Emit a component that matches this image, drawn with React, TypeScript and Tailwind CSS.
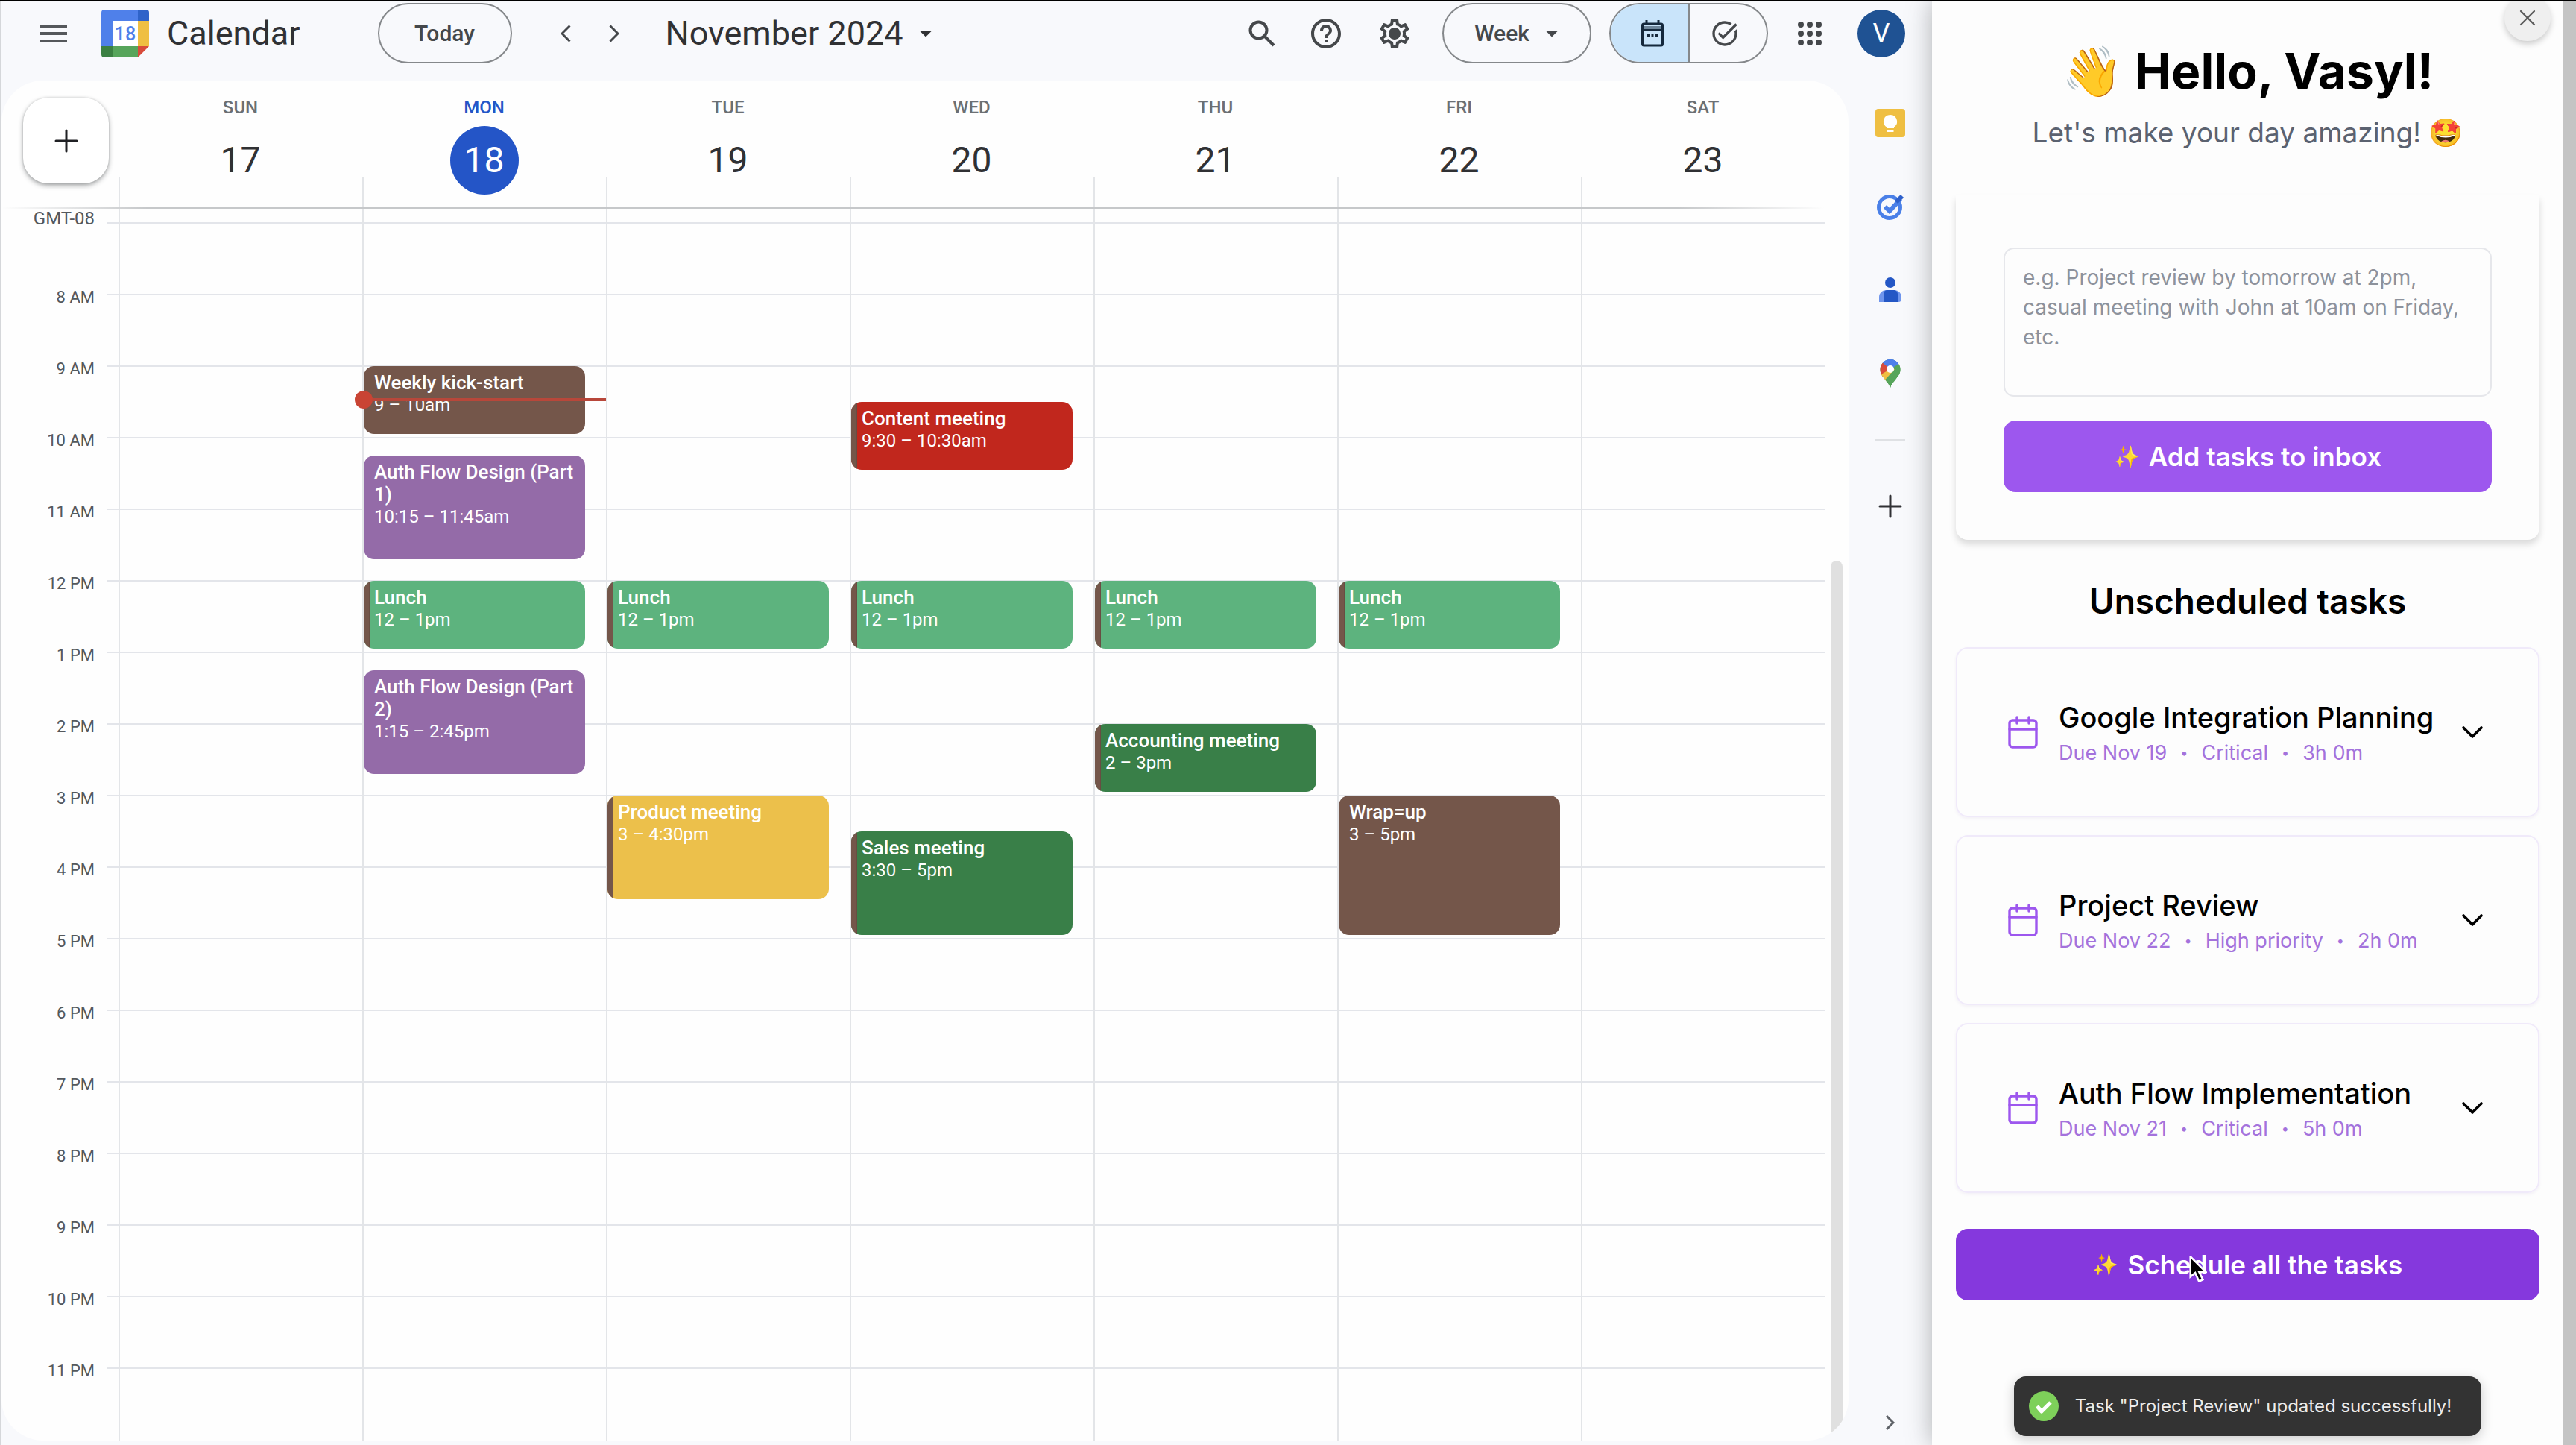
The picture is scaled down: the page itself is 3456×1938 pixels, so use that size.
import React from 'react';
import { Calendar, ChevronDown, Plus, X } from 'lucide-react';
import { MdArrowDropDown, MdHelpOutline, MdOutlineSettings, MdTaskAlt } from 'react-icons/md';

interface CalendarEvent {
  title: string;
  time: string;
  start: number; // hours, 24h clock
  end: number;
  color: string;
  striped?: boolean;
  now?: boolean;
}

interface Day {
  name: string;
  date: number;
  today?: boolean;
  events: CalendarEvent[];
}

interface Task {
  title: string;
  due: string;
  priority: string;
  duration: string;
}

const GRID_START = 7;

const lunch: CalendarEvent = {
  title: 'Lunch',
  time: '12 – 1pm',
  start: 12,
  end: 13,
  color: 'bg-[#5db37e]',
  striped: true,
};

const days: Day[] = [
  { name: 'SUN', date: 17, events: [] },
  {
    name: 'MON',
    date: 18,
    today: true,
    events: [
      { title: 'Weekly kick-start', time: '9 – 10am', start: 9, end: 10, color: 'bg-[#74564a]', now: true },
      { title: 'Auth Flow Design (Part 1)', time: '10:15 – 11:45am', start: 10.25, end: 11.75, color: 'bg-[#946ba8]' },
      lunch,
      { title: 'Auth Flow Design (Part 2)', time: '1:15 – 2:45pm', start: 13.25, end: 14.75, color: 'bg-[#946ba8]' },
    ],
  },
  {
    name: 'TUE',
    date: 19,
    events: [
      lunch,
      { title: 'Product meeting', time: '3 – 4:30pm', start: 15, end: 16.5, color: 'bg-[#ecc04b]', striped: true },
    ],
  },
  {
    name: 'WED',
    date: 20,
    events: [
      { title: 'Content meeting', time: '9:30 – 10:30am', start: 9.5, end: 10.5, color: 'bg-[#c1271d]', striped: true },
      lunch,
      { title: 'Sales meeting', time: '3:30 – 5pm', start: 15.5, end: 17, color: 'bg-[#397f48]', striped: true },
    ],
  },
  {
    name: 'THU',
    date: 21,
    events: [
      lunch,
      { title: 'Accounting meeting', time: '2 – 3pm', start: 14, end: 15, color: 'bg-[#397f48]', striped: true },
    ],
  },
  {
    name: 'FRI',
    date: 22,
    events: [
      lunch,
      { title: 'Wrap=up', time: '3 – 5pm', start: 15, end: 17, color: 'bg-[#74564a]' },
    ],
  },
  { name: 'SAT', date: 23, events: [] },
];

const hours = [
  '8 AM', '9 AM', '10 AM', '11 AM', '12 PM', '1 PM', '2 PM', '3 PM',
  '4 PM', '5 PM', '6 PM', '7 PM', '8 PM', '9 PM', '10 PM', '11 PM',
];

const tasks: Task[] = [
  { title: 'Google Integration Planning', due: 'Due Nov 19', priority: 'Critical', duration: '3h 0m' },
  { title: 'Project Review', due: 'Due Nov 22', priority: 'High priority', duration: '2h 0m' },
  { title: 'Auth Flow Implementation', due: 'Due Nov 21', priority: 'Critical', duration: '5h 0m' },
];

function CalendarLogo() {
  return (
    <svg viewBox="0 0 64 64" className="size-16 shrink-0" aria-hidden="true">
      <path d="M4 0h45v15H15v34H0V4a4 4 0 0 1 4-4z" fill="#4f80ea" />
      <path d="M49 0h11a4 4 0 0 1 4 4v11H49z" fill="#2f63c9" />
      <path d="M49 15h15v34H49z" fill="#efbf42" />
      <path d="M15 49h34v15H15z" fill="#57a55b" />
      <path d="M0 49h15v15H4a4 4 0 0 1-4-4z" fill="#3b8042" />
      <path d="M49 49h15L49 64z" fill="#d84b3b" />
      <path d="M15 15h34v34H15z" fill="#fff" />
      <text x="32" y="41" textAnchor="middle" fontSize="25" fontWeight="500" fill="#4f80ea">
        18
      </text>
    </svg>
  );
}

function SearchIcon() {
  return (
    <svg viewBox="0 0 36 36" className="size-9" fill="none" stroke="currentColor" strokeWidth="4">
      <circle cx="13.5" cy="13.5" r="11" />
      <path d="m21.500 21.500 12.500 12.500" />
    </svg>
  );
}

function SettingsIcon() {
  return (
    <svg viewBox="0 0 24 24" className="size-12" fill="currentColor">
      <MdOutlineSettings size={24} />
      <circle cx="12" cy="12" r="3.700" />
    </svg>
  );
}

function AppsIcon() {
  return (
    <svg viewBox="0 0 32 32" className="size-8" fill="currentColor">
      {[4, 16, 28].map((y) => [4, 16, 28].map((x) => <circle key={`${x}-${y}`} cx={x} cy={y} r="4" />))}
    </svg>
  );
}

function Header() {
  return (
    <header className="flex items-center pt-[3px] pb-[23px] pl-[52px] pr-9 text-[#45484b]">
      <button aria-label="Main menu">
        <svg viewBox="0 0 36 24" className="h-6 w-9" fill="#55585b">
          <path d="M0 0h36v4H0zM0 10h36v4H0zM0 20h36v4H0z" />
        </svg>
      </button>
      <div className="ml-[46px] flex items-center gap-6">
        <CalendarLogo />
        <span className="text-[45px] leading-[56px] text-[#303134]">Calendar</span>
      </div>
      <button className="ml-[104px] h-[81px] w-[180px] rounded-full border-2 border-[#85888b] text-[30px] font-medium">
        Today
      </button>
      <div className="ml-10 flex">
        <button aria-label="Previous week" className="flex w-[65px] justify-center">
          <svg viewBox="0 0 14 24" className="h-6 w-[14px]" fill="none" stroke="currentColor" strokeWidth="3">
            <path d="M12.500 1.500 2 12l10.500 10.500" />
          </svg>
        </button>
        <button aria-label="Next week" className="flex w-[65px] justify-center">
          <svg viewBox="0 0 14 24" className="h-6 w-[14px]" fill="none" stroke="currentColor" strokeWidth="3">
            <path d="M1.500 1.500 12 12 1.500 22.500" />
          </svg>
        </button>
      </div>
      <button className="ml-9 flex items-center gap-3 text-[45px] leading-[56px] text-[#303134]">
        November 2024
        <MdArrowDropDown className="size-9" />
      </button>

      <div className="ml-auto flex items-center">
        <button aria-label="Search" className="flex w-[84px] justify-center">
          <SearchIcon />
        </button>
        <button aria-label="Support" className="flex w-[88px] justify-center">
          <MdHelpOutline className="size-12" />
        </button>
        <button aria-label="Settings" className="flex w-[96px] justify-center">
          <SettingsIcon />
        </button>
        <button className="ml-4 flex h-[81px] w-[200px] items-center justify-center gap-3 rounded-full border-2 border-[#85888b] pl-2 text-[30px] font-medium">
          Week
          <MdArrowDropDown className="size-9" />
        </button>
        <div className="ml-6 flex h-[81px] w-[213px] overflow-hidden rounded-full border-2 border-[#85888b]">
          <button aria-label="Calendar view" className="flex flex-1 items-center justify-center border-r-2 border-[#85888b] bg-[#c9e4fa] pl-2">
            <svg viewBox="0 0 30 36" className="h-9 w-[30px]" fill="none" stroke="#15283c" strokeWidth="3">
              <rect x="1.500" y="5" width="27" height="29" rx="2" />
              <path d="M7 0v6M23 0v6M1.500 13h27" />
              <path d="M1.500 9h27" strokeWidth="1" />
              <path d="M8 20.500h3M13.500 20.500h3M19 20.500h3" />
            </svg>
          </button>
          <button aria-label="Tasks view" className="flex flex-1 items-center justify-center pr-2">
            <MdTaskAlt className="size-10" />
          </button>
        </div>
        <button aria-label="Google apps" className="flex w-[112px] justify-center">
          <AppsIcon />
        </button>
        <button aria-label="Account" className="ml-2 size-16 rounded-full bg-[#1f5293] text-[36px] leading-[64px] text-white">
          V
        </button>
      </div>
    </header>
  );
}

function EventBlock({ event }: { event: CalendarEvent }) {
  const row = (event.start - GRID_START) * 4 + 1;
  const span = (event.end - event.start) * 4;

  return (
    <div className="relative col-start-1 mr-7 mb-[5px]" style={{ gridRow: `${row} / span ${span}` }}>
      <button className={`flex size-full items-stretch overflow-hidden rounded-[14px] text-left text-white ${event.color}`}>
        {event.striped && <span className="w-2 shrink-0 border-r border-black/10 bg-[#74564a]" />}
        <span className={`flex min-w-0 flex-1 flex-col pt-[7px] text-[24px] leading-[30px] ${event.striped ? 'pl-1.5' : 'pl-[14px]'}`}>
          <span className="text-[26px] leading-[30px] font-medium">{event.title}</span>
          <span>{event.time}</span>
        </span>
      </button>
      {event.now && (
        <div className="absolute top-[33px] -right-7 -left-3 flex items-center">
          <span className="size-6 rounded-full bg-[#c94434]" />
          <span className="h-1 flex-1 bg-[#b8473a]" />
        </div>
      )}
    </div>
  );
}

function WeekGrid() {
  return (
    <main className="relative mb-1.5 flex min-w-0 flex-1 flex-col overflow-hidden rounded-[56px] bg-[#fefefe]">
      {/* Day headings */}
      <div className="flex pr-8">
        <div className="w-[157px] shrink-0 pt-[23px] pl-[29px]">
          <button
            aria-label="Create"
            className="flex size-[115px] items-center justify-center rounded-[34px] bg-white text-[#202124] shadow-[0_3px_6px_rgba(60,64,67,0.45),0_0_3px_rgba(60,64,67,0.2)]"
          >
            <Plus className="size-12" strokeWidth={1.5} />
          </button>
        </div>
        {days.map((day) => (
          <div key={day.name} className="flex flex-1 flex-col">
            <div className="flex h-[129px] flex-col items-center pt-5">
              <span className={`text-[24px] leading-8 font-medium ${day.today ? 'text-[#2455c7]' : 'text-[#6b6f73]'}`}>
                {day.name}
              </span>
              <span
                className={`mt-[9px] size-[92px] shrink-0 rounded-full text-center text-[48px] leading-[92px] ${
                  day.today ? 'bg-[#2455c7] text-white' : 'text-[#303134]'
                }`}
              >
                {day.date}
              </span>
            </div>
            <div className="h-10 border-l-2 border-[#e3e5e8]" />
          </div>
        ))}
      </div>
      <div className="mr-8 h-[3px] shrink-0 bg-[linear-gradient(to_right,transparent,#c6c8ca_8%,#c6c8ca_92%,transparent)]" />

      {/* Hours */}
      <div className="flex flex-1 pr-8">
        <div className="w-[142px] shrink-0 pr-[17px] text-right text-[22px] text-[#54585c]">
          <div className="h-[71px] text-[24px] leading-[26px]">GMT-08</div>
          {hours.map((hour) => (
            <div key={hour} className="h-24 leading-[96px]">
              {hour}
            </div>
          ))}
        </div>
        <div className="grid min-w-0 flex-1">
          <div className="col-start-1 row-start-1 pt-[18px]">
            <div className="border-t-2 border-[#e3e5ea]" />
            {hours.map((hour) => (
              <div key={hour} className="h-24 border-b-2 border-[#e3e5ea]" />
            ))}
          </div>
          <div className="col-start-1 row-start-1 flex pl-[15px]">
            {days.map((day) => (
              <div key={day.name} className="grid flex-1 auto-rows-[24px] content-start border-l-2 border-[#e3e5e8] pt-[19px]">
                {day.events.map((event) => (
                  <EventBlock key={event.title} event={event} />
                ))}
              </div>
            ))}
          </div>
        </div>
      </div>

      {/* Overlay scrollbar thumb */}
      <div className="absolute top-[644px] right-2 bottom-0 w-4 rounded-t-full bg-[#e0e0e0]" />
    </main>
  );
}

function KeepIcon() {
  return (
    <svg viewBox="0 0 40 40" className="size-10">
      <rect x="0" y="1" width="40" height="38" rx="4" fill="#efbf42" />
      <path d="M20 9a9 9 0 0 0-5 16.500V27h10v-1.500A9 9 0 0 0 20 9zM15.500 29h9v3h-9z" fill="#fff" />
    </svg>
  );
}

function TasksIcon() {
  return (
    <svg viewBox="0 0 40 40" className="size-10" fill="none">
      <circle cx="19" cy="21" r="14.500" stroke="#4a80e8" strokeWidth="5" />
      <path d="m13 20 6 6L34 10" stroke="#4a80e8" strokeWidth="6" />
      <path d="m28 14 8-8" stroke="#2e60cb" strokeWidth="6" />
    </svg>
  );
}

function ContactsIcon() {
  return (
    <svg viewBox="0 0 40 40" className="size-10">
      <circle cx="20" cy="10" r="7" fill="#2457c5" />
      <path d="M5 36v-7a9 9 0 0 1 9-9h12a9 9 0 0 1 9 9v3a4 4 0 0 1-4 4z" fill="#6f95ec" />
      <path d="M11 36V26c0-4 2-6 5-6h8c4 0 6 2 6 6v10z" fill="#2457c5" />
    </svg>
  );
}

function MapsIcon() {
  return (
    <svg viewBox="0 0 40 40" className="size-10">
      <defs>
        <clipPath id="pin">
          <path d="M20 1A13.500 13.500 0 0 0 6.500 14.500c0 6 3 9 6.500 13.500 3 4 5.500 6 7 11 1.500-5 4-7 7-11 3.500-4.500 6.500-7.500 6.500-13.500A13.500 13.500 0 0 0 20 1z" />
        </clipPath>
      </defs>
      <g clipPath="url(#pin)">
        <path d="M0 0h40v40H0z" fill="#57a55b" />
        <path d="M20 14 10 2-2 12v12l10 4z" fill="#d84b3b" />
        <path d="M20 14 6 22v14l14-8 8-14z" fill="#efbf42" />
        <path d="M20 14 8 4l6-6h24L30 6z" fill="#4f80ea" />
        <path d="M34 5 8 34l12 8 20-16z" fill="#57a55b" />
        <path d="M20 14 9 4l6-6h20L30 8z" fill="#4f80ea" />
      </g>
      <circle cx="20" cy="14" r="5" fill="#fff" />
    </svg>
  );
}

function SideRail() {
  return (
    <aside className="flex w-28 shrink-0 flex-col items-center pt-[37px] text-[#303134]">
      <div className="flex flex-col gap-[72px]">
        <button aria-label="Keep"><KeepIcon /></button>
        <button aria-label="Tasks"><TasksIcon /></button>
        <button aria-label="Contacts"><ContactsIcon /></button>
        <button aria-label="Maps"><MapsIcon /></button>
      </div>
      <hr className="mt-[68px] w-10 border-t-2 border-[#dfe1e4]" />
      <button aria-label="Get add-ons" className="mt-16">
        <Plus className="size-12" strokeWidth={1.5} />
      </button>
      <button aria-label="Hide side panel" className="mt-auto mb-[18px]">
        <svg viewBox="0 0 14 24" className="h-6 w-[14px]" fill="none" stroke="#5f6368" strokeWidth="3">
          <path d="M2 3l9 9-9 9" />
        </svg>
      </button>
    </aside>
  );
}

function TaskCard({ task }: { task: Task }) {
  return (
    <button className="flex w-full items-center gap-6 rounded-[16px] border-2 border-[#f0eafa] px-16 py-16 text-left shadow-[0_2px_4px_rgba(80,40,140,0.06)]">
      <Calendar className="size-12 shrink-0 text-[#9d57ee]" strokeWidth={1.7} />
      <span className="flex min-w-0 flex-1 flex-col">
        <span className="text-[38px] leading-[56px] font-medium whitespace-nowrap text-black">{task.title}</span>
        <span className="flex gap-[18px] text-[27px] leading-10 text-[#a472dc]">
          <span>{task.due}</span>
          <span className="text-[18px]">•</span>
          <span>{task.priority}</span>
          <span className="text-[18px]">•</span>
          <span>{task.duration}</span>
        </span>
      </span>
      <ChevronDown className="size-12 shrink-0 text-black" strokeWidth={1.8} />
    </button>
  );
}

function Cursor() {
  return (
    <svg viewBox="0 0 18 28" className="absolute top-9 left-[40%] h-9 w-6" aria-hidden="true">
      <path d="M1 1v21l5-4 4 9 4-2-4-8h7z" fill="#000" stroke="#fff" strokeWidth="2" />
    </svg>
  );
}

function AssistantPanel() {
  return (
    <section className="relative flex w-1/4 shrink-0 flex-col border-r-[17px] border-[#c4c4c4] bg-[#fdfdfd] font-[Inter,'Noto_Color_Emoji',sans-serif] shadow-[0_0_32px_rgba(60,64,67,0.4)]">
      <button
        aria-label="Close"
        className="absolute -top-2 right-[17px] flex size-[62px] items-center justify-center rounded-full bg-[#efefef] text-[#5c5c5c] shadow-[0_4px_8px_rgba(0,0,0,0.2)]"
      >
        <X className="size-9" strokeWidth={1.5} />
      </button>
      <div className="pt-[47px] text-center">
        <h1 className="text-[66px] leading-[94px] font-bold text-black">👋 Hello, Vasyl!</h1>
        <p className="mt-2 text-[37px] leading-[56px] text-[#5b6270]">Let's make your day amazing! 🤩</p>
      </div>

      <div className="px-8">
        <div className="mt-14 rounded-b-[16px] px-16 pt-[70px] pb-16 shadow-[0_6px_10px_rgba(0,0,0,0.14)]">
          <textarea
            aria-label="New tasks"
            placeholder="e.g. Project review by tomorrow at 2pm, casual meeting with John at 10am on Friday, etc."
            className="block h-[200px] w-full resize-none rounded-[14px] border-2 border-[#e6e7eb] px-6 py-[18px] text-[28px] leading-10 placeholder:text-[#8d929c]"
          />
          <button className="mt-8 flex h-24 w-full items-center justify-center gap-3 rounded-[16px] bg-[#9d57ee] text-[35px] font-semibold text-white">
            <span className="text-[28px]">✨</span>
            Add tasks to inbox
          </button>
        </div>

        <h2 className="mt-[50px] text-center text-[46px] leading-[64px] font-semibold text-black">Unscheduled tasks</h2>
        <div className="mt-[30px] flex flex-col gap-6">
          {tasks.map((task) => (
            <TaskCard key={task.title} task={task} />
          ))}
        </div>
        <div className="relative mt-12">
          <button className="flex h-24 w-full items-center justify-center gap-3 rounded-[16px] bg-[#8538dd] text-[35px] font-semibold text-white">
            <span className="text-[28px]">✨</span>
            Schedule all the tasks
          </button>
          <Cursor />
        </div>
      </div>

      <div role="status" className="mx-auto mt-auto mb-3 flex h-20 items-center gap-[22px] rounded-[16px] bg-[#333] pr-10 pl-5 text-[24px] text-[#ececec] shadow-[0_4px_16px_rgba(0,0,0,0.2)]">
        <svg viewBox="0 0 40 40" className="size-10" fill="none">
          <circle cx="20" cy="20" r="20" fill="#7ed05a" />
          <path d="m11 20 6 7 12-12" stroke="#fff" strokeWidth="5" strokeLinejoin="round" />
        </svg>
        Task "Project Review" updated successfully!
      </div>
    </section>
  );
}

export default function App() {
  return (
    <div className="flex min-h-screen overflow-hidden border-t border-black font-[Roboto,sans-serif]">
      <div className="flex min-w-0 flex-1 flex-col border-l-2 border-[#d5d7da] bg-[#f8f9fc]">
        <Header />
        <div className="flex flex-1">
          <WeekGrid />
          <SideRail />
        </div>
      </div>
      <AssistantPanel />
    </div>
  );
}
